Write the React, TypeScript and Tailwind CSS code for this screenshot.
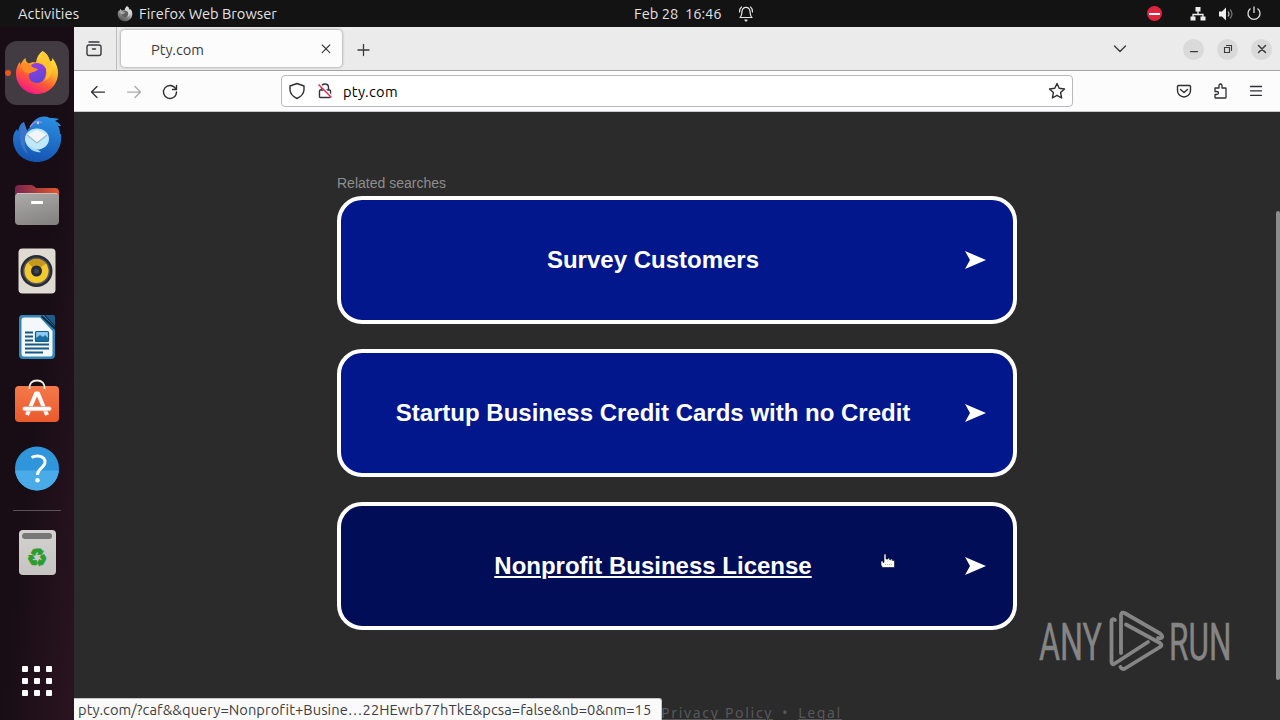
import type { ReactNode } from "react";

interface Search {
  label: string;
  hovered?: boolean;
}

const searches: Search[] = [
  { label: "Survey Customers" },
  { label: "Startup Business Credit Cards with no Credit" },
  { label: "Nonprofit Business License", hovered: true },
];

const FirefoxIcon = ({ size = 46, gray = false }: { size?: number; gray?: boolean }) => (
  <svg width={size} height={size} viewBox="0 0 46 46" className={gray ? "grayscale brightness-110" : ""}>
    <defs>
      <linearGradient id="fx" x1="0.8" y1="0.05" x2="0.3" y2="1">
        <stop offset="0" stopColor="#fff04a" />
        <stop offset="0.35" stopColor="#ffb427" />
        <stop offset="0.65" stopColor="#ff5a35" />
        <stop offset="1" stopColor="#f5148b" />
      </linearGradient>
      <linearGradient id="fxp" x1="0.3" y1="0" x2="0.6" y2="1">
        <stop offset="0" stopColor="#9a3ee0" />
        <stop offset="1" stopColor="#5b45d6" />
      </linearGradient>
    </defs>
    <path fill="url(#fx)" d="M28.500 1C34 4 35 8.500 36 11C38 12 38.500 9.500 38 8C42 12 44 18 44 23C44 35 34.500 44 23 44S2 35 2 23.500C2 18 4 14 6 12L6.500 15C7.500 12 9.500 9.500 11.500 8C11.500 11 13 13 15 13.500C18 12 20 12 22 12.500C22.500 7.500 25 3.500 28.500 1Z" />
    <path fill="url(#fxp)" d="M17 15C21 11 30 13 32 19C33 27 29 33 23 33C17 33 14 29 15 23C19 22 22 21 22 19C20 18 18 18 17 15Z" />
    <path fill="#ff8b26" d="M7 16C11 13 15 14 17 16C19 18 21 18 24 19C22 22 18 22 16 23C12 25 9 21 7 16Z" />
    <path fill="#ffc52e" opacity="0.8" d="M28.500 1C26 8 28 12 31 16C34 21 33 27 30 31C38 28 40 18 36 11C35 8.500 34 4 28.500 1Z" />
  </svg>
);

const ThunderbirdIcon = () => (
  <svg width="50" height="50" viewBox="0 0 50 50">
    <defs>
      <linearGradient id="tb" x1="0.6" y1="0" x2="0.4" y2="1">
        <stop offset="0" stopColor="#2b8ee0" />
        <stop offset="1" stopColor="#1553b0" />
      </linearGradient>
    </defs>
    <path fill="url(#tb)" d="M18 13C21 5 30 0 38 4C42 4 45 4 47 5L43 7C46 8 48 10 49 12L46 12C48 15 48 18 48 20L49 20C51 36 39 48 25 48C11 48 1 38 1 25C1 20 3 17 5 15L6 18C7 12 9 9 12 8C12 12 13 15 15 17Z" />
    <path fill="#3c75ca" d="M12 8C5 20 8 34 16 40C11 31 12 24 16 19Z" />
    <ellipse cx="25" cy="25" rx="12" ry="10.500" fill="#bfe9fb" />
    <path fill="#f1f5f7" d="M15 21L25 16L35 21L25 29Z" />
    <path d="M15 21L25 29L35 21" fill="none" stroke="#9cbac8" strokeWidth="1.200" />
    <path fill="#a6dcf8" d="M14 29C18 35 23 33 29 38C24 39 17 36 14 29Z" />
    <path d="M18 13C22 7 27 6 30 9" fill="none" stroke="#a08cdc" strokeWidth="1.200" />
    <circle cx="26" cy="9" r="1.200" fill="#bfe3ff" />
  </svg>
);

const FilesIcon = () => (
  <svg width="46" height="42" viewBox="0 0 46 42">
    <defs>
      <linearGradient id="fd">
        <stop offset="0" stopColor="#78234f" />
        <stop offset="1" stopColor="#e3592b" />
      </linearGradient>
      <linearGradient id="fg" x1="0.3" y1="0" x2="0.7" y2="1">
        <stop offset="0" stopColor="#aaa8a7" />
        <stop offset="1" stopColor="#858382" />
      </linearGradient>
    </defs>
    <path fill="url(#fd)" d="M1 13V5Q1 1 5 1H17Q19 1 20.500 2.500L22 4H41Q45 4 45 8V13Z" />
    <rect x="1" y="9" width="44" height="32" rx="4" fill="url(#fg)" />
    <path d="M3 9.500H43" stroke="#c5c3c2" />
    <rect x="17" y="17" width="12" height="3" rx="0.500" fill="#fff" />
  </svg>
);

const RhythmboxIcon = () => (
  <svg width="38" height="46" viewBox="0 0 38 46">
    <rect x="0.500" y="0.500" width="37" height="45" rx="4" fill="#dfdbd2" />
    <circle cx="18.500" cy="23" r="16" fill="#282b34" />
    <circle cx="18.500" cy="23" r="13.500" fill="#555860" />
    <circle cx="18.500" cy="23" r="12" fill="#f4c92e" />
    <path d="M10 14.500A12 12 0 0 1 28 15.500L22 20H15Z" fill="#c79918" />
    <circle cx="18.500" cy="23" r="5.500" fill="#242a35" />
    <circle cx="18.500" cy="23" r="2.500" fill="#3f4651" />
  </svg>
);

const WriterIcon = () => (
  <svg width="38" height="46" viewBox="0 0 38 46">
    <path fill="#3187b8" d="M4 1H26L37 13V41Q37 45 33 45H5Q1 45 1 41V5Q1 1 4 1Z" />
    <path fill="#f5f8fa" d="M6 3.500H22L34.500 17V40Q34.500 42.500 32 42.500H6Q3.500 42.500 3.500 40V6Q3.500 3.500 6 3.500Z" />
    <path fill="#1d5d8b" d="M27 1H35Q37 1 37 3V12Z" />
    <path fill="#112c42" d="M24 1L37 13V16L23 3Z" />
    <path d="M7 18.500H15M7 22.500H15M7 26.500H15M7 30.500H31M7 34.500H31M7 38.500H25" stroke="#175985" strokeWidth="2" />
    <rect x="17.500" y="17.500" width="13" height="10" rx="1" fill="#8acaf0" stroke="#175985" strokeWidth="1.200" />
    <path d="M18 27V24L22 21L25 23L27 21L30 24V27Z" fill="#186fa1" />
  </svg>
);

const SoftwareIcon = () => (
  <svg width="46" height="46" viewBox="0 0 46 46" className="-mt-1">
    <defs>
      <linearGradient id="sw" x1="0" y1="0" x2="0" y2="1">
        <stop offset="0" stopColor="#f4794a" />
        <stop offset="1" stopColor="#e95a2c" />
      </linearGradient>
    </defs>
    <rect x="1" y="8" width="44" height="36" rx="4" fill="url(#sw)" />
    <path d="M15.500 11C15 5.500 18 2.500 23 2.500S31 5.500 30.500 11" fill="none" stroke="#f3ece0" strokeWidth="1.800" />
    <path d="M13 37L22 15.500H24L33 37" fill="none" stroke="#fff" strokeWidth="4" strokeLinejoin="round" />
    <rect x="8.500" y="28.500" width="29" height="4.500" rx="2.200" fill="#fff" stroke="#e9835f" strokeWidth="0.700" />
  </svg>
);

const HelpIcon = () => (
  <svg width="46" height="46" viewBox="0 0 46 46">
    <circle cx="23" cy="22.500" r="22" fill="#2f96dc" />
    <path d="M1.100 24.500A22 22 0 0 0 44.900 24.500Z" fill="#4aabe9" />
    <path d="M17.500 11.500C23 8.500 31 10 31 16C31 22 23.500 22 23.500 29" fill="none" stroke="#fff" strokeWidth="3" />
    <circle cx="23.500" cy="34.300" r="2.200" fill="#fff" />
  </svg>
);

const TrashIcon = () => (
  <div className="flex h-[45px] w-[37px] flex-col items-center rounded-[4px] bg-linear-to-b from-[#d4d2d1] to-[#c6c4c3] pt-[3px]">
    <span className="h-[6px] w-[30px] rounded-[3px] bg-[#777]" />
    <span className="mt-[6px] font-['DejaVu_Sans',sans-serif] text-[24px] leading-[26px] text-[#2b9d2b] [-webkit-text-stroke:0.8px_#2b9d2b]">♻</span>
  </div>
);

const AppsIcon = () => (
  <div className="grid grid-cols-3 gap-[6px]">
    {Array.from({ length: 9 }).map((_, i) => (
      <span key={i} className="size-[6px] rounded-[1px] bg-white" />
    ))}
  </div>
);

const DockItem = ({ children, active }: { children: ReactNode; active?: boolean }) => (
  <div className="relative flex h-[66px] w-full shrink-0 items-center justify-center">
    {active && <span className="absolute left-[5px] size-[6px] rounded-full bg-[#e95420]" />}
    <div className={active ? "flex size-16 items-center justify-center rounded-xl bg-[#433b42]" : "flex"}>
      {children}
    </div>
  </div>
);

// thin outline icon used all over the browser toolbar
const Line = ({ d, className = "", w = 1.25 }: { d: string; className?: string; w?: number }) => (
  <svg
    width="18"
    height="18"
    viewBox="0 0 18 18"
    fill="none"
    stroke="currentColor"
    strokeWidth={w}
    strokeLinecap="round"
    strokeLinejoin="round"
    className={`shrink-0 ${className}`}
  >
    <path d={d} />
  </svg>
);

const TopBar = () => (
  <header className="flex h-[27px] shrink-0 items-center bg-[#131313] text-[14.67px] text-[#e4e4e4]">
    <span className="ml-[18px] w-[99px] pt-px tracking-[0.1px]">Activities</span>
    <FirefoxIcon size={16} gray />
    <span className="ml-[6px] w-[495px] pt-px whitespace-nowrap">Firefox Web Browser</span>
    <span className="w-[103px] pt-px whitespace-pre">Feb 28  16:46</span>
    <Line w={1.2} d="M3 12.500H15C13 11.500 13.500 8.500 13 6.500C12.500 1 5.500 1 5 6.500C4.500 8.500 5 11.500 3 12.500ZM8 15H10L9 16ZM2.500 7Q2.500 3.500 4.500 2M15.500 7Q15.500 3.500 13.500 2" />
    <div className="ml-auto flex items-center pr-[18px]">
      <span className="mr-[28px] flex size-[15px] items-center justify-center rounded-full bg-[#e0243e]">
        <span className="h-[2px] w-[11px] bg-white" />
      </span>
      <svg width="16" height="16" viewBox="0 0 16 16" className="mr-[12px]">
        <path d="M8 5V8M3 11V8.500H13V11" stroke="#eee" strokeWidth="1.300" fill="none" />
        <path fill="#eee" d="M5.500 1H10.500V5.500H5.500ZM0.500 10.500H5.500V14.500H0.500ZM10.500 10.500H15.500V14.500H10.500Z" />
      </svg>
      <svg width="16" height="16" viewBox="0 0 16 16" className="mr-[12px]">
        <path fill="#eee" d="M1 5.500H4L8 1.500V14.500L4 10.500H1Z" />
        <path d="M10 5.500Q12 8 10 10.500" stroke="#bbb" fill="none" strokeWidth="1.200" />
        <path d="M12 3.500Q16 8 12 12.500" stroke="#777" fill="none" strokeWidth="1.200" />
      </svg>
      <svg width="16" height="16" viewBox="0 0 16 16" fill="none" stroke="#ddd" strokeWidth="1.300">
        <path d="M4.500 2.500A6 6 0 1 0 11.500 2.500M8 0.500V7" />
      </svg>
    </div>
  </header>
);

const Dock = () => (
  <aside className="flex w-[74px] shrink-0 flex-col items-center bg-linear-to-br from-[#180d15] from-50% to-[#2b1420] pt-[13px]">
    <DockItem active><FirefoxIcon /></DockItem>
    <DockItem><ThunderbirdIcon /></DockItem>
    <DockItem><FilesIcon /></DockItem>
    <DockItem><RhythmboxIcon /></DockItem>
    <DockItem><WriterIcon /></DockItem>
    <DockItem><SoftwareIcon /></DockItem>
    <DockItem><HelpIcon /></DockItem>
    <div className="my-2 h-px w-12 shrink-0 bg-[#5b5258]" />
    <DockItem><TrashIcon /></DockItem>
    <div className="mt-auto pb-[24px]">
      <AppsIcon />
    </div>
  </aside>
);

const TabBar = () => (
  <div className="flex h-[44px] shrink-0 items-center border-b border-[#a5a5a8] bg-[#ebebeb] text-[#3a3a3f]">
    <div className="flex h-full w-[43px] items-center border-r border-[#bdbdbf] pt-px pl-[11px]">
      <Line w={1.4} d="M4 2H14M4 5H14Q16 5 16 7V13.500Q16 15.500 14 15.500H4Q2 15.500 2 13.500V7Q2 5 4 5ZM7.500 9H10.500" />
    </div>
    <div className="ml-[4px] flex h-[37px] w-[221px] items-center rounded-[4px] bg-[#fcfcfc] pl-[30px] shadow-[0_0_3px_rgba(0,0,0,0.45)]">
      <span className="pt-[2px] text-[14.67px]">Pty.com</span>
      <Line w={1.1} className="mt-px mr-[7px] ml-auto" d="M5.200 5L12.800 12.600M12.800 5L5.200 12.600" />
    </div>
    <Line w={1.300} className="mt-[2px] ml-[12px]" d="M9.500 3.500V14.500M4 9H15" />
    <Line w={1.4} className="mt-px mr-[54px] ml-auto" d="M3.500 6L9 11.500L14.500 6" />
    <div className="flex gap-[13px] pt-px pr-[8px]">
      <span className="flex size-[21px] items-center justify-center rounded-full bg-[#dadada]">
        <Line d="M5.500 11.500H12.500" />
      </span>
      <span className="flex size-[21px] items-center justify-center rounded-full bg-[#dadada]">
        <Line w={1.1} d="M5.500 7.500H10.500V12.500H5.500ZM7.500 5.500H12.500V10.500" />
      </span>
      <span className="flex size-[21px] items-center justify-center rounded-full bg-[#dadada]">
        <Line w={1.500} d="M5.500 5.500L12.500 12.500M12.500 5.500L5.500 12.500" />
      </span>
    </div>
  </div>
);

const NavBar = () => (
  <div className="flex h-[41px] shrink-0 items-center border-b border-[#c9c9cc] bg-[#fcfcfc] text-[#2f2f34]">
    <Line className="mt-px ml-[15px]" d="M15.500 9H2.500M8 3.500L2.500 9L8 14.500" />
    <Line className="mt-px ml-[18px] text-[#aaa]" d="M2.500 9H15.500M10 3.500L15.500 9L10 14.500" />
    <Line w={1.400} className="mt-px ml-[18px]" d="M14.500 5.500A6.500 6.500 0 1 0 15.500 9M15.500 2.500V6.500H11.500" />
    <div className="ml-[102px] flex h-[32px] w-[792px] items-center rounded-[4px] border border-[#b9b9bd] bg-white pl-[6px]">
      <Line w={1.400} d="M9 1.500L16 4V8Q15.500 13.500 9 16.500Q2.500 13.500 2 8V4Z" />
      <svg width="18" height="18" viewBox="0 0 18 18" fill="none" strokeWidth="1.400" className="ml-[10px]">
        <path d="M5.500 8V5.500Q5.500 2 9 2T12.500 5.500V8M4.500 8H13.500Q14.500 8 14.500 9V14.500Q14.500 15.500 13.500 15.500H4.500Q3.500 15.500 3.500 14.500V9Q3.500 8 4.500 8Z" stroke="#333" />
        <path d="M3 2L16 15" stroke="#fff" strokeWidth="2.500" />
        <path d="M2.500 2.500L15.500 15.500" stroke="#e22850" />
      </svg>
      <span className="ml-[9px] pt-px text-[14.67px] text-black tracking-[0.3px]">pty.com</span>
      <Line w={1.400} className="mr-[6px] ml-auto" d="M9 1.500L11.200 6.300L16.500 7L12.600 10.600L13.600 16L9 13.300L4.400 16L5.400 10.600L1.500 7L6.800 6.300Z" />
    </div>
    <div className="ml-auto flex gap-[18px] pr-[15px]">
      <Line w={1.400} d="M3.500 3.500H14.500Q15.500 3.500 15.500 4.500V8.500A6.500 6.500 0 0 1 2.500 8.500V4.500Q2.500 3.500 3.500 3.500ZM5.500 7.500L9 10.500L12.500 7.500" />
      <Line w={1.300} d="M4 6H8V3.500Q8 2 9.500 2T11 3.500V6H14.500Q15 6 15 6.500V15.500Q15 16 14.500 16H4.500Q4 16 4 15.500V12.500H5.500Q7.500 12.500 7.500 11T5.500 9.500H4Z" />
      <Line w={1.300} d="M3.500 4.500H14.500M3.500 8.900H14.500M3.500 13.300H14.500" />
    </div>
  </div>
);

const SearchCard = ({ label, hovered }: Search) => (
  <a
    className={`flex h-[128px] items-center rounded-[25px] border-4 border-white pr-[27px] font-['Liberation_Sans',sans-serif] text-[24px] font-bold text-white ${
      hovered ? "bg-[#010d56]" : "bg-[#01178b]"
    }`}
  >
    <span className={`flex-1 text-center ${hovered ? "underline decoration-2 underline-offset-2" : ""}`}>{label}</span>
    <svg width="21" height="18" viewBox="0 0 21 18" fill="#fff">
      <path d="M0 0L21 9L0 18L5 9Z" />
    </svg>
  </a>
);

const Watermark = () => (
  <svg width="194" height="64" viewBox="0 0 194 64" className="absolute top-[497px] left-[964px]">
    <g className="font-[Roboto,sans-serif]" fill="#858585" stroke="#858585" strokeWidth="0.500" fontSize="52">
      <text transform="translate(1 50.500) scale(0.6 1)" textLength="105" lengthAdjust="spacingAndGlyphs">ANY</text>
      <text transform="translate(131 50.500) scale(0.6 1)" textLength="104" lengthAdjust="spacingAndGlyphs">RUN</text>
    </g>
    <g fill="none" stroke="#858585" strokeWidth="3.800" strokeLinejoin="round" strokeLinecap="round">
      <path d="M77 11Q74 9 73.500 12V53Q74 56 76 55L110 33" />
      <path d="M83 44V6Q83.500 2.500 86.500 4L122 24.500Q125 27 124 28.500Q123 30 120 29" />
      <path d="M88 15.500L122 34Q125 36 122 38L87 59.500Q84 61 82.500 58" />
    </g>
  </svg>
);

const HandCursor = () => (
  <svg width="16" height="16" viewBox="0 0 16 16" className="absolute top-[441px] left-[806px]">
    <path
      d="M4 1H6V6H8V5H9.500V6.500H11V6H12.500V7.500H14.500V14.500H2.500L1 12V8H3V9.500H4Z"
      fill="#fff"
      stroke="#000827"
      strokeWidth="0.600"
    />
    <path d="M5 11.500H13M8 6.500V9M11 7V9" stroke="#999" strokeWidth="0.600" strokeDasharray="1 1" />
  </svg>
);

const Page = () => (
  <main className="relative flex-1 overflow-hidden bg-[#2b2b2b]">
    <div className="mx-auto flex w-[680px] flex-col pt-[62px]">
      <h2 className="h-[22px] font-['Liberation_Sans',sans-serif] text-[14px] leading-[18px] text-[#8e8e8e]">
        Related searches
      </h2>
      <div className="flex flex-col gap-[25px]">
        {searches.map((s) => (
          <SearchCard key={s.label} {...s} />
        ))}
      </div>
      <footer className="mt-[73px] ml-[324px] flex gap-[9px] font-['Noto_Sans',sans-serif] text-[14px] leading-5 whitespace-nowrap text-[#585858] tracking-[1.7px]">
        <span className="underline decoration-1 underline-offset-1">Privacy Policy</span>
        <span>•</span>
        <span className="underline decoration-1 underline-offset-1">Legal</span>
      </footer>
    </div>
    <HandCursor />
    <Watermark />
    <div className="absolute top-[99px] right-0 h-[469px] w-[4px] rounded-full bg-[#8c8c8c]" />
    <div className="absolute bottom-0 left-0 h-[22px] w-[588px] overflow-hidden rounded-tr-[3px] border-t border-r border-[#c6c6c6] bg-[#fafafa] pl-[4px] text-[14.67px] leading-[22px] whitespace-nowrap text-[#3d3d42] tracking-[0.08px]">
      {"pty.com/?caf&&query=Nonprofit+Busine…22HEwrb77hTkE&pcsa=false&nb=0&nm=15"}
    </div>
  </main>
);

export default function App() {
  return (
    <div className="flex h-[720px] w-[1280px] flex-col overflow-hidden font-['Ubuntu','Noto_Sans',sans-serif]">
      <TopBar />
      <div className="flex min-h-0 flex-1">
        <Dock />
        <div className="flex min-w-0 flex-1 flex-col">
          <TabBar />
          <NavBar />
          <Page />
        </div>
      </div>
    </div>
  );
}
